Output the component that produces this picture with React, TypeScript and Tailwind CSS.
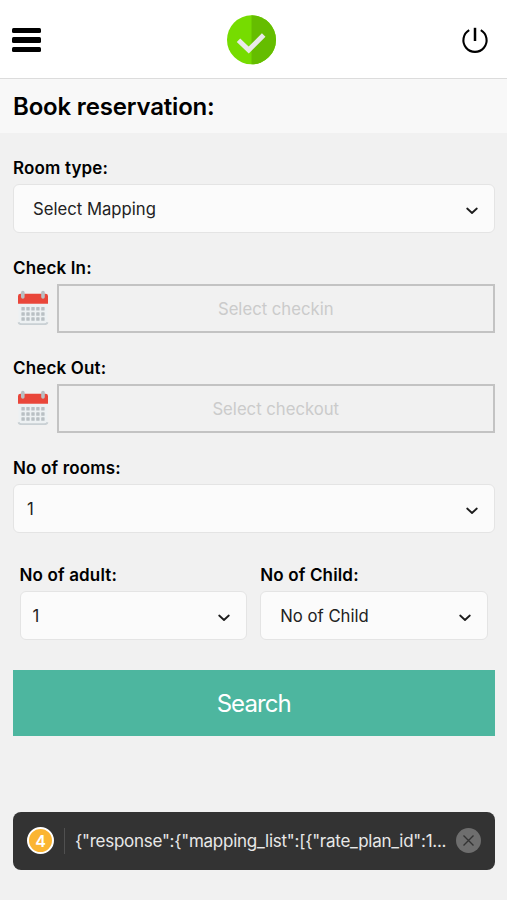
import type { ReactNode } from "react";

const Chevron = () => (
  <svg width="12" height="8" viewBox="0 0 12 8" className="mt-[4px] shrink-0" fill="none" stroke="#1c1c1c" strokeWidth="1.8">
    <path d="M1.2 1.5 L6 6 L10.8 1.5" strokeLinecap="round" strokeLinejoin="round" />
  </svg>
);

const CalendarIcon = () => (
  <svg width="32" height="37" viewBox="0 0 32 37" className="mt-[6px] shrink-0">
    <path d="M1.5 13 H30.5 V32 Q30.5 34.5 28 34.5 H4 Q1.5 34.5 1.5 32 Z" fill="#edf1f3" />
    <path d="M1.5 32.2 Q2 34.2 5 34.2 H27 Q30 34.2 30.5 32.2" fill="none" stroke="#c9d0d4" strokeWidth="1.8" />
    <path d="M1 13.8 V6 Q1 3.8 3.5 3.8 H28.5 Q31 3.8 31 6 V13.8 Z" fill="#e9463a" />
    {[4.4, 9.3, 14.3, 19.2, 24.2].map((x) =>
      [17, 22.2, 27.2].map((y) => (
        <rect key={`${x}-${y}`} x={x} y={y} width="3.4" height="3.6" rx="0.6" fill="#b9c0c4" />
      ))
    )}
    <rect x="4" y="0.8" width="3.6" height="8" rx="1.8" fill="#b9bfc3" />
    <rect x="24.2" y="0.8" width="3.6" height="8" rx="1.8" fill="#b9bfc3" />
  </svg>
);

const Label = ({ children }: { children: ReactNode }) => (
  <p className="mb-[6px] h-5 text-[17px] font-semibold leading-5 tracking-[0.15px] text-black">{children}</p>
);

const SelectBox = ({ value, className }: { value: string; className: string }) => (
  <button
    className={`flex h-[49px] w-full items-center justify-between rounded-md border border-[#e4e4e4] bg-[#fbfbfb] pr-[16px] pt-px text-left text-[16.7px] leading-6 text-[#222] ${className}`}
  >
    <span>{value}</span>
    <Chevron />
  </button>
);

const DateField = ({ label, placeholder }: { label: string; placeholder: string }) => (
  <div>
    <Label>{label}</Label>
    <div className="flex pl-[4px]">
      <CalendarIcon />
      <div className="ml-2 flex h-[49px] flex-1 items-center justify-center border-2 border-[#c3c3c3] pt-px text-[16.7px] leading-6 text-[#cbcbcb]">
        {placeholder}
      </div>
    </div>
  </div>
);

const App = () => {
  return (
    <div className="flex h-[900px] w-full flex-col overflow-hidden bg-[#f1f1f1] font-['Inter',sans-serif]">
      <header className="flex h-[79px] shrink-0 items-center justify-between border-b border-[#dcdcdc] bg-white pl-[12px] pr-[18px]">
        <button className="mt-[2px] flex w-[28.5px] flex-col gap-[4px]">
          <span className="h-[5.4px] rounded-[1.5px] bg-black" />
          <span className="h-[5.4px] rounded-[1.5px] bg-black" />
          <span className="h-[5.4px] rounded-[1.5px] bg-black" />
        </button>
        <svg width="50" height="50" viewBox="0 0 50 50" className="mt-[2px] ml-[2px]">
          <circle cx="24.5" cy="24.8" r="24.5" fill="#76dc00" />
          <path d="M24.5 0.3 A24.5 24.5 0 0 1 24.5 49.3 Z" fill="#65bd00" />
          <path d="M11.5 25.3 L21.7 35 L36.7 20" fill="none" stroke="#e9e9e9" strokeWidth="5" />
        </svg>
        <svg width="28" height="28" viewBox="0 0 28 28" className="mt-[2px]" fill="none" stroke="#000" strokeWidth="2.1">
          <path d="M8.2 4.2 A11.6 11.6 0 1 0 19.8 4.2" />
          <path d="M14 1.8 V15" strokeWidth="2.5" />
        </svg>
      </header>

      <div className="flex h-[54px] shrink-0 items-center bg-[#f8f8f8] px-[13px] pt-[2px]">
        <h1 className="text-2xl font-semibold tracking-[-0.18px] text-black">Book reservation:</h1>
      </div>

      <main className="flex flex-col pl-[13px] pr-[12.5px] pt-[25px]">
        <div className="flex flex-col gap-[25px]">
          <div>
            <Label>Room type:</Label>
            <SelectBox value="Select Mapping" className="pl-[19px]" />
          </div>
          <DateField label="Check In:" placeholder="Select checkin" />
          <DateField label="Check Out:" placeholder="Select checkout" />
          <div>
            <Label>No of rooms:</Label>
            <SelectBox value="1" className="pl-[13px]" />
          </div>
        </div>

        <div className="mt-[32px] flex gap-[13px] px-[6.5px]">
          <div className="flex-1">
            <Label>No of adult:</Label>
            <SelectBox value="1" className="pl-[12px]" />
          </div>
          <div className="flex-1">
            <Label>No of Child:</Label>
            <SelectBox value="No of Child" className="pl-[19px]" />
          </div>
        </div>

        <button className="mt-[30px] h-[66px] w-full bg-[#4db69f] pt-[2px] text-2xl tracking-[-0.9px] text-white">Search</button>

        <div className="mt-[75.5px] flex h-[58px] items-center rounded-lg bg-[#333] pl-[14px] pr-[14px]">
          <span className="flex size-[27px] shrink-0 items-center justify-center rounded-full border-2 border-white bg-[#fbb532] text-[16px] font-semibold text-white">
            4
          </span>
          <span className="ml-[10px] h-[26px] w-px shrink-0 bg-[#505050]" />
          <span className="ml-[10px] flex-1 whitespace-nowrap pt-[2px] text-[17px] tracking-[-0.25px] text-[#e8e8e8]">
            {'{"response":{"mapping_list":[{"rate_plan_id":1...'}
          </span>
          <svg width="25" height="25" viewBox="0 0 25 25" className="shrink-0">
            <circle cx="12.5" cy="12.5" r="12.5" fill="#6e6e6e" />
            <path d="M7.5 7.5 L17.5 17.5 M17.5 7.5 L7.5 17.5" stroke="#333" strokeWidth="1.4" />
          </svg>
        </div>
      </main>
    </div>
  );
};

export default App;
